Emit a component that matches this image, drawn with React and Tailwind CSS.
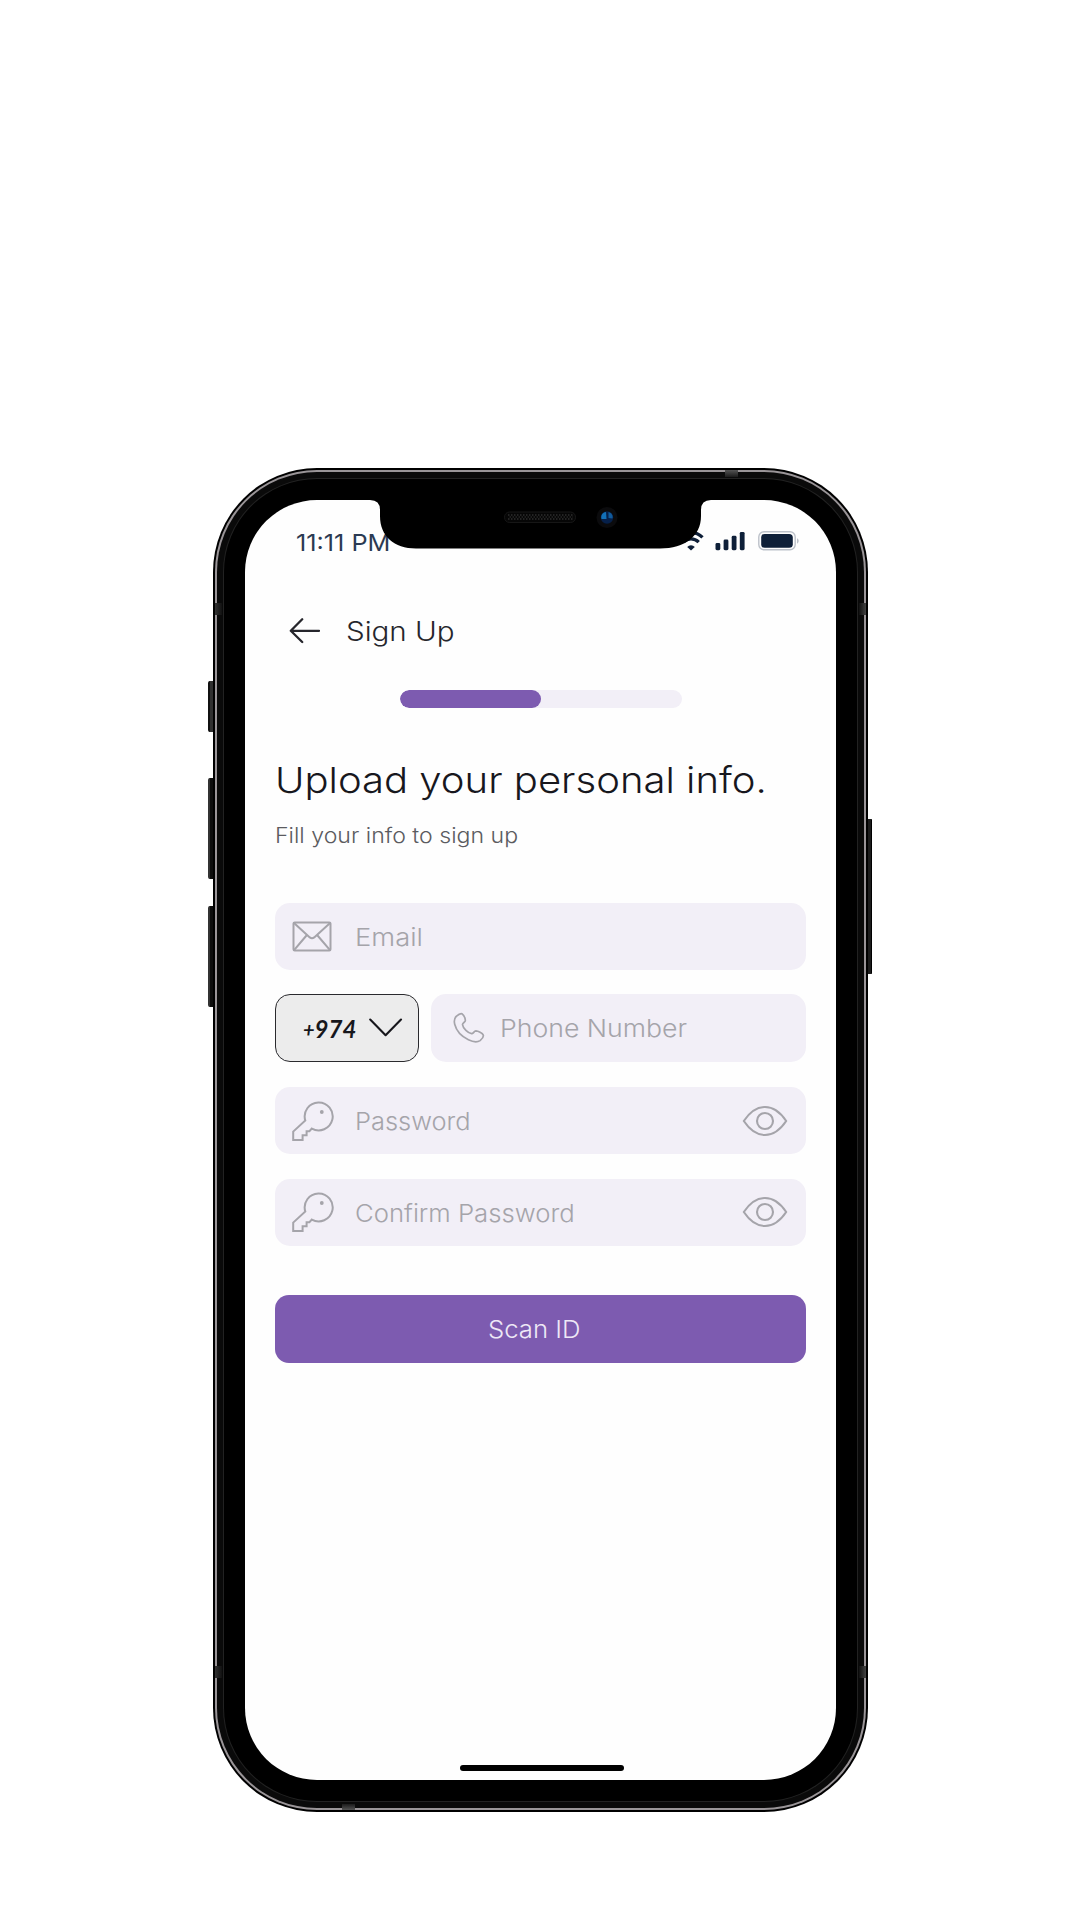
import React from "react";

const line = {
  fill: "none",
  stroke: "currentColor",
  strokeLinecap: "round",
  strokeLinejoin: "round",
};

function WifiIcon() {
  return (
    <svg width="28" height="20" viewBox="0 0 28 20" fill="none" stroke="#0e1f38" strokeWidth="3.3">
      <path d="M2.5 6.4a16.4 16.4 0 0 1 23 0" />
      <path d="M6.300 11.200a10.800 10.800 0 0 1 15.400 0" />
      <path d="M14 19.600l-3.800-3.600a5 5 0 0 1 7.600 0z" fill="#0e1f38" stroke="none" />
    </svg>
  );
}

function SignalIcon() {
  return (
    <svg width="30" height="20" viewBox="0 0 30 20" fill="#0e1f38">
      <rect x="0.5" y="12" width="4.8" height="7.2" rx="1.4" />
      <rect x="8.6" y="8.5" width="4.8" height="10.7" rx="1.4" />
      <rect x="16.7" y="4.8" width="4.8" height="14.4" rx="1.4" />
      <rect x="24.8" y="0.9" width="4.8" height="18.3" rx="1.4" />
    </svg>
  );
}

function BatteryIcon() {
  return (
    <svg width="42" height="20" viewBox="0 0 42 20">
      <rect x="0.8" y="0.8" width="36.4" height="18" rx="5.2" fill="none" stroke="#bcc1c9" strokeWidth="1.4" />
      <rect x="3.2" y="3" width="31.6" height="13.8" rx="3.6" fill="#0e1f38" />
      <path d="M39.2 7.2c1.8.8 1.8 4.6 0 5.4z" fill="#aeb4bd" />
    </svg>
  );
}

function BackIcon() {
  return (
    <svg width="32" height="28" viewBox="0 0 32 28" className="text-[#26262c]" {...line} strokeWidth="2.3">
      <path d="M31 13.8H3.3M14.2 2.2L2.8 13.8L14.2 25" />
    </svg>
  );
}

function MailIcon() {
  return (
    <svg width="40" height="32" viewBox="0 0 40 32" {...line} strokeWidth="2">
      <path d="M2.7 2.4H37.3Q38.5 2.4 38.5 3.6V29.2Q38.5 30.4 37.3 30.4H2.7Q1.5 30.4 1.5 29.2V3.6Q1.5 2.4 2.7 2.4z" />
      <path d="M2.3 3.2L17.8 17.4q2.2 1.7 4.4 0L37.8 3.2M2.3 29.8L14.9 15M37.8 29.8L25.1 15" />
    </svg>
  );
}

function PhoneIcon() {
  return (
    <svg width="32" height="32" viewBox="0 0 32 32" {...line} strokeWidth="1.7">
      <path d="M3.2 4.4C5.2 2.6 7.4 1.2 8.9 1.7c1.7 1.2 3.3 4.7 3.5 6.6.1 2-2.9 2.4-2.9 4.3.5 3.8 5.6 8.5 9.1 9.1 1.9.1 2.3-2.8 4.3-2.8 2.1.1 6.6 2.3 7.4 4.2.4 1.7-1.4 4.1-3.2 5.5-2.9 1.9-7.4 1.3-11.7-.8C9.2 24.8 3.4 19 1.7 12.3 1 9.3 1.3 6.3 3.2 4.4z" />
    </svg>
  );
}

function KeyIcon() {
  return (
    <svg width="42" height="42" viewBox="0 0 42 42" {...line} strokeLinejoin="miter" strokeWidth="2">
      <path d="M13.3 20.5A14 14 0 1 1 19.8 28.6L17.4 31.2H14.6V35.3H10.6V40H1.2V31.6L13.3 20.5z" />
      <circle cx="29.8" cy="12" r="1.9" fill="currentColor" stroke="none" />
    </svg>
  );
}

function EyeIcon() {
  return (
    <svg width="46" height="32" viewBox="0 0 46 32" {...line} strokeWidth="2.1">
      <path d="M1.8 16C7.5 7.5 14.6 2 23 2s15.5 5.5 21.2 14C38.5 24.5 31.4 30 23 30S7.5 24.5 1.8 16z" />
      <circle cx="23" cy="16" r="8" />
    </svg>
  );
}

function ChevronIcon() {
  return (
    <svg width="34" height="20" viewBox="0 0 34 20" className="text-[#17171c]" {...line} strokeWidth="2.1">
      <path d="M1.2 1.6L16.6 17.2L32 1.6" />
    </svg>
  );
}

function Notch() {
  return (
    <div className="absolute left-[125px] top-0">
      <svg width="341" height="50" viewBox="0 0 341 50" className="block">
        <path d="M0 0Q10 0 10 10V16C10 36 24 48.5 46 48.5H290C315 48.5 331 36 331 16V10Q331 0 341 0z" fill="#000" />
        <rect x="134.5" y="12" width="71" height="10.5" rx="5" fill="#060606" stroke="#1c1c1c" strokeWidth="0.8" />
        <path d="M138 15H203M138 19H203" stroke="#2e2e2e" strokeWidth="1.5" strokeDasharray="1.5 1.5" />
        <path d="M139.5 17H203" stroke="#262626" strokeWidth="1.5" strokeDasharray="1.5 1.5" />
        <circle cx="237" cy="17.5" r="10.5" fill="#0b0b0d" />
        <circle cx="237" cy="17.5" r="6.2" fill="#06204a" />
        <path d="M231.500 19c-1-4 1-6.500 4.500-7l.5 7z" fill="#1270b8" />
        <path d="M238.500 12c3 .8 4.800 3.500 3.900 6.500l-3.900-.5z" fill="#115a9a" />
      </svg>
    </div>
  );
}

function Field({ icon, label, scale, reveal }) {
  return (
    <div className="flex h-[67.5px] items-center rounded-[15px] bg-[#f2eff7] pl-[17px] pr-[18px] text-[#a5a4aa]">
      <div className="flex w-[63px] items-center">{icon}</div>
      <span className={"mt-[3px] origin-left whitespace-nowrap text-[24px] font-[340] leading-8 " + scale}>{label}</span>
      {reveal && <div className="ml-auto"><EyeIcon /></div>}
    </div>
  );
}

function Screen() {
  return (
    <div className="relative flex h-[1280px] w-[591px] flex-col overflow-hidden rounded-[72px] bg-[#fefefe]">
      <div className="mt-[31px] flex h-5 items-center pl-[51px] pr-[36px]">
        <span className="mt-[3px] origin-left whitespace-nowrap text-[23.5px] leading-5 text-[#2b3a52] scale-x-[1.075]">11:11 PM</span>
        <div className="ml-auto flex items-center">
          <WifiIcon />
          <div className="ml-[10px]"><SignalIcon /></div>
          <div className="ml-[13px]"><BatteryIcon /></div>
        </div>
      </div>

      <div className="mt-[64px] flex h-8 items-center pl-[43px]">
        <BackIcon />
        <h1 className="-mt-px ml-[26px] origin-left whitespace-nowrap text-[26.5px] font-[350] leading-8 text-[#26262c] scale-x-[1.115]">Sign Up</h1>
      </div>

      <div className="mx-auto mt-[42.5px] h-[18px] w-[282px] overflow-hidden rounded-full bg-[#f2eff7]">
        <div className="h-full w-1/2 rounded-full bg-[#7d5bb0]" />
      </div>

      <div className="flex flex-col px-[30px]">
        <h2 className="mt-[47.5px] origin-left whitespace-nowrap text-[36px] font-[350] leading-[50px] text-[#17171d] scale-x-[1.112]">Upload your personal info.</h2>
        <p className="mt-[17px] origin-left whitespace-nowrap text-[21px] font-[320] leading-7 text-[#5b5b60] scale-x-[1.1]">Fill your info to sign up</p>

        <div className="mt-[52.5px] flex flex-col gap-[24.4px]">
          <Field icon={<MailIcon />} label="Email" scale="scale-x-[1.14]" />
          <div className="flex gap-3">
            <div className="flex h-[68px] w-[144px] items-center rounded-[15px] border-[1.5px] border-[#2a2a2e] bg-[#ececec] pl-[27px]">
              <span className="flex w-[66px] items-center whitespace-nowrap pt-[2px] font-['Lato'] text-[24px] font-bold italic leading-8 text-[#17171c]">
                <span className="text-[20px]">+</span>974
              </span>
              <ChevronIcon />
            </div>
            <div className="flex h-[68px] flex-1 items-center rounded-[15px] bg-[#f2eff7] pl-[22px] text-[#a5a4aa]">
              <PhoneIcon />
              <span className="ml-[15px] mt-[2px] origin-left whitespace-nowrap text-[24px] font-[340] leading-8 scale-x-[1.11]">Phone Number</span>
            </div>
          </div>
          <Field icon={<KeyIcon />} label="Password" scale="scale-x-[1.06]" reveal />
          <Field icon={<KeyIcon />} label="Confirm Password" scale="scale-x-[1.07]" reveal />
        </div>

        <button className="mt-[48.5px] flex h-[68.5px] items-center justify-center rounded-[14px] bg-[#7d5bb0] text-[24px] font-[340] leading-8 text-[#eee8f6]">
          <span className="mr-[13px] mt-[3px] scale-x-[1.07]">Scan ID</span>
        </button>
      </div>

      <Notch />
      <div className="mx-auto mb-[9px] mt-auto h-[6px] w-[164px] translate-x-[1px] rounded-full bg-black" />
    </div>
  );
}

export default function App() {
  return (
    <div className="h-[1920px] w-[1080px] overflow-hidden bg-white pl-[213px] pt-[468px] font-['Inter',sans-serif]">
      <div className="relative w-[655px]">
        <div className="absolute -left-[5px] top-[213px] h-[51px] w-[6px] rounded-l-[2px] border-l-2 border-[#111] bg-[#303030]" />
        <div className="absolute -left-[5px] top-[310px] h-[101px] w-[6px] rounded-l-[2px] border-l-2 border-[#333] bg-[#0d0d0d]" />
        <div className="absolute -left-[5px] top-[438px] h-[101px] w-[6px] rounded-l-[2px] border-l-2 border-[#333] bg-[#0d0d0d]" />
        <div className="absolute -right-[4px] top-[351px] h-[155px] w-[5px] rounded-r-[1px] border-r border-black bg-[#1c1c1c]" />

        <div className="relative rounded-[104px] bg-black p-[2px]">
          <div className="rounded-[102px] bg-[#9a9598] p-[2px]">
            <div className="rounded-[100px] bg-[#0a0a0a] p-[6px]">
              <div className="rounded-[94px] bg-[#222] p-px">
                <div className="rounded-[93px] bg-black p-[21px]">
                  <Screen />
                </div>
              </div>
            </div>
          </div>
        </div>

        <div className="absolute left-[512px] top-[2px] h-[7px] w-[13px] bg-linear-to-b from-[#555] to-[#1c1c1c]" />
        <div className="absolute bottom-[2px] left-[129px] h-[6px] w-[13px] bg-linear-to-t from-[#555] to-[#1c1c1c]" />
        <div className="absolute left-[2px] top-[135px] h-3 w-[7px] bg-linear-to-r from-[#333] to-[#111]" />
        <div className="absolute right-[2px] top-[135px] h-3 w-[7px] bg-linear-to-l from-[#444] to-[#111]" />
        <div className="absolute bottom-[134px] left-[2px] h-3 w-[7px] bg-linear-to-r from-[#333] to-[#111]" />
        <div className="absolute bottom-[134px] right-[2px] h-3 w-[7px] bg-linear-to-l from-[#444] to-[#111]" />
      </div>
    </div>
  );
}
